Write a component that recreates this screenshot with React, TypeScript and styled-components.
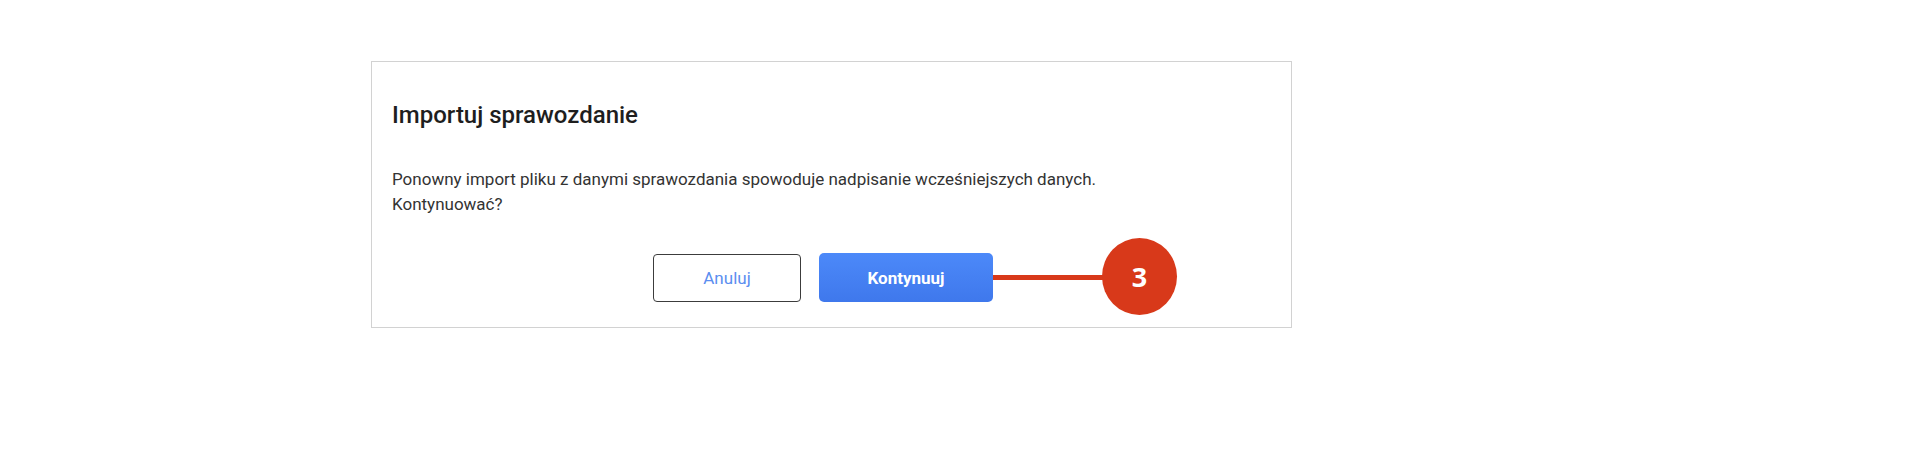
import React from 'react'
import styled, { createGlobalStyle } from 'styled-components'

const GlobalStyle = createGlobalStyle`
  body {
    margin: 0;
    background: #ffffff;
    font-family: Roboto, "Liberation Sans", Arial, sans-serif;
  }
`

const Page = styled.div`
  padding: 61px 0 0 371px;
  height: 474px;
  box-sizing: border-box;
`

const Dialog = styled.div`
  width: 921px;
  height: 267px;
  box-sizing: border-box;
  border: 1px solid #d2d2d2;
  padding: 39px 20px 0;
  display: flex;
  flex-direction: column;
`

const Title = styled.h2`
  margin: 0;
  font-size: 24px;
  line-height: 28px;
  font-weight: 500;
  color: #1e1e1e;
`

const Message = styled.p`
  margin: 38px 0 0;
  font-size: 17px;
  line-height: 25px;
  color: #333333;
`

const Actions = styled.div`
  display: flex;
  align-items: center;
  gap: 18px;
  margin-top: 36px;
  padding-left: 261px;
`

const Button = styled.button<{ $primary?: boolean }>`
  box-sizing: border-box;
  height: ${(p) => (p.$primary ? '49px' : '48px')};
  width: ${(p) => (p.$primary ? '174px' : '148px')};
  border-radius: ${(p) => (p.$primary ? '5px' : '4px')};
  font-family: Roboto, "Liberation Sans", Arial, sans-serif;
  font-size: 17px;
  font-weight: ${(p) => (p.$primary ? 700 : 400)};
  cursor: pointer;
  border: ${(p) => (p.$primary ? 'none' : '1.5px solid #3c3c3c')};
  color: ${(p) => (p.$primary ? '#ffffff' : '#5b8ef0')};
  background: ${(p) =>
    p.$primary ? 'linear-gradient(180deg, #4c89f9 0%, #3f78ec 100%)' : '#ffffff'};
`

const Anchor = styled.div`
  position: relative;
  display: flex;
`

const Callout = styled.div`
  position: absolute;
  left: 100%;
  top: 50%;
  transform: translateY(-50%);
  display: flex;
  align-items: center;
`

const Connector = styled.div`
  width: 112px;
  height: 5px;
  background: #d8391a;
  margin-right: -3px;
`

const Badge = styled.div`
  width: 75px;
  height: 77px;
  border-radius: 50%;
  background: #d8391a;
  color: #ffffff;
  display: flex;
  align-items: center;
  justify-content: center;
  font-family: "Open Sans", "Liberation Sans", sans-serif;
  font-weight: 700;
  font-size: 27px;
  margin-top: -3px;
`

export default function App() {
  return (
    <>
      <GlobalStyle />
      <Page>
        <Dialog>
          <Title>Importuj sprawozdanie</Title>
          <Message>
            Ponowny import pliku z danymi sprawozdania spowoduje nadpisanie wcześniejszych danych.
            <br />
            Kontynuować?
          </Message>
          <Actions>
            <Button>Anuluj</Button>
            <Anchor>
              <Button $primary>Kontynuuj</Button>
              <Callout>
                <Connector />
                <Badge>3</Badge>
              </Callout>
            </Anchor>
          </Actions>
        </Dialog>
      </Page>
    </>
  )
}
